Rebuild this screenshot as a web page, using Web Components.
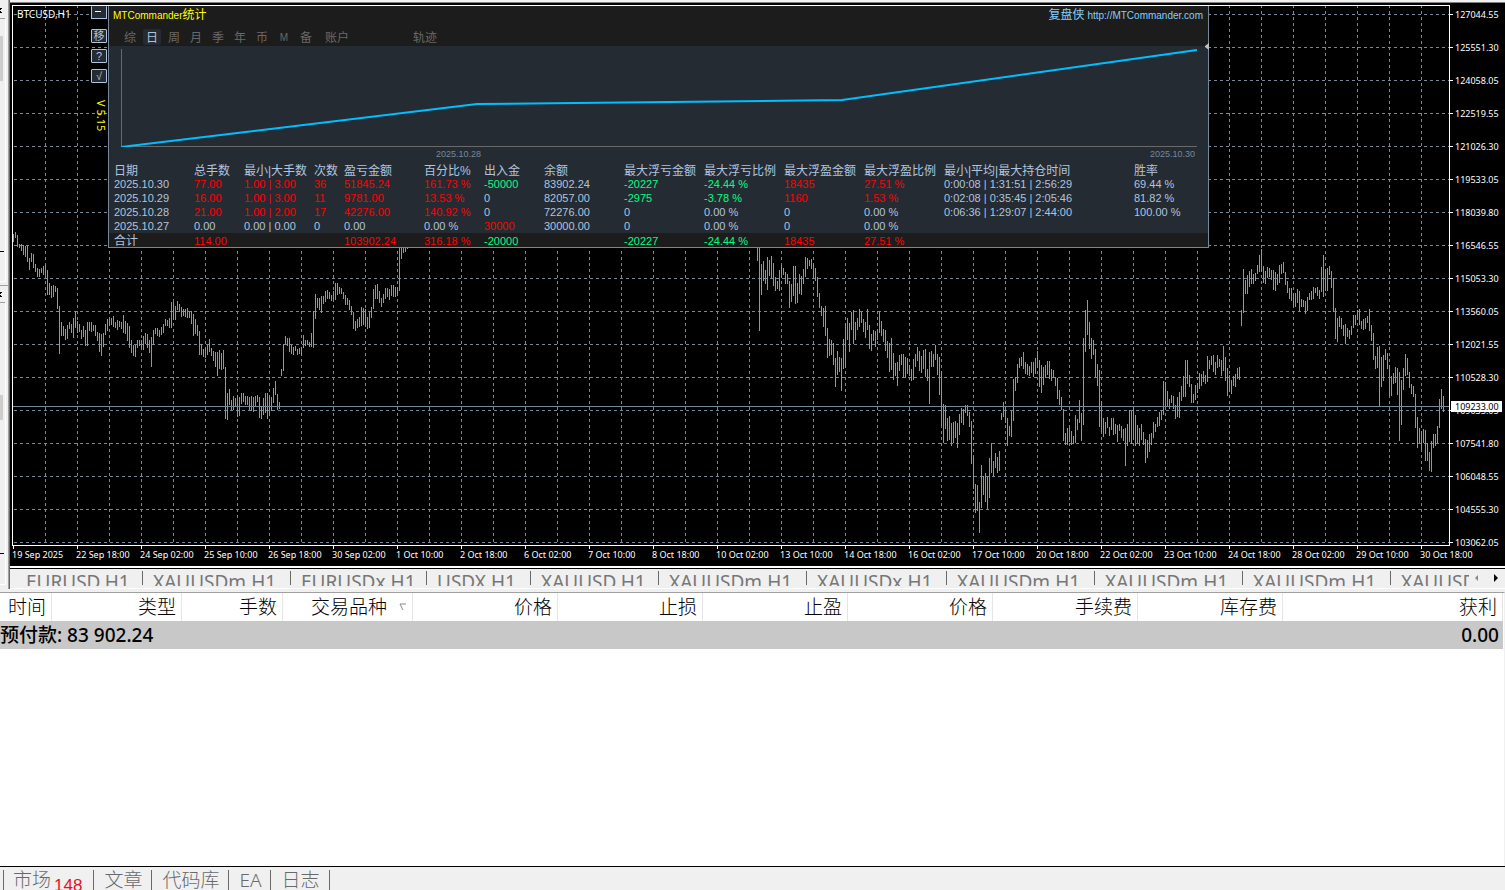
<!DOCTYPE html>
<html lang="zh-CN">
<head>
<meta charset="utf-8">
<title>BTCUSD,H1</title>
<style>
  html, body { margin: 0; height: 100%; }
  body { font-family: "Noto Sans", "Noto Sans CJK SC", sans-serif; background: #f0f0f0; color: #000; overflow: hidden; }
</style>
</head>
<body>
<terminal-app></terminal-app>

<script>
const define = (name, html, setup) => {
  const template = document.createElement('template');
  template.innerHTML = html;
  customElements.define(name, class extends HTMLElement {
    connectedCallback() {
      if (this.shadowRoot) return;
      const root = this.attachShadow({ mode: 'open' });
      root.append(template.content.cloneNode(true));
      if (setup) setup(root, this);
    }
  });
};

/* ---------- docked panels at the left edge ---------- */
define('dock-edge', `
<style>
  :host { display: block; background: #f0f0f0; border-right: 1px solid #696969; box-shadow: inset -1px 0 #a0a0a0; box-sizing: border-box; overflow: hidden; }
  svg { display: block; width: 9px; height: 588px; }
</style>
<svg viewBox="0 0 9 588" shape-rendering="crispEdges" aria-hidden="true">
  <path d="M0 8h2v1h-1v1h-1zM0 11h1v1h1v1h-2zM0 292h2v1h-1v1h-1zM0 295h1v1h1v1h-2z" fill="#000"/>
  <path d="M0 18h5v1h-5zM0 302h5v1h-5zM0 285h8v1h-8z" fill="#a0a0a0"/>
  <path d="M5 19h1v263h-6v-1h5zM5 303h1v282h-6v-1h5z" fill="#fff"/>
  <path d="M0 36h3v45h-3zM0 395h3v25h-3z" fill="#cdcdcd"/>
  <path d="M0 251h4v1h-4zM0 553h4v1h-4z" fill="#000"/>
</svg>`);

/* ---------- price bars: [high, low, high, low, ...], three units to a pixel ---------- */
const SERIES = [
  { x: 0, y: 224, hl: [12,36,6,24,15,51,42,54,42,63,45,75,48,81,48,96,84,120,69,96,72,114,102,126,114,141,117,141,114,129,108,135,105,135,120,195,159,195,168,204,165,201,168,186,174,237,228,372,276,318,288,318,297,330,285,327,276,297,282,309,264,324,243,294,273,309,282,306,300,327,288,321,300,348,276,348,276,303,276,306,285,303,285,318,306,333,309,366,312,378,309,351,282,315,267,303,267,288,264,285,258,291,276,294,270,300,273,291,276,297,255,309,273,312,279,333,288,354,330,369,345,378,345,381,330,354,330,348,330,354,318,360,309,342,312,354,330,369,321,411,300,345,294,312,294,318,300,321,291,315,282,309,267,288,270,288,264,294,216,294,216,270,228,270,213,240,222,246,231,261,237,258,237,261,234,264,243,264,243,282,252,318,267,312,285,318,303,375,342,375,357,381,351,384,345,375,327,366,354,378,363,393,366,411,366,438,360,417,369,420,360,417,411,567,489,570,477,525,510,540,498,540,504,531,495,561,501,558,489,522,489,516,498,525,498,525,501,540,498,543,501,546,498,531,495,516,501,564,528,567,504,555,489,549,489,567,498,558,501,543,474,519,453,495,492,540,516,537,417,438,342,423,318,345,324,348,324,366,345,372,351,375,348,363,357,375,354,372,351,378,315,354,330,348,330,345,336,351,309,351,243,354,192,267,204,234,204,240,198,249,198,222,183,216,180,207,186,207,195,213,183,210,159,210,159,195,171,192,174,192,186,207,195,225,204,225,210,240,228,255,246,297,273,303,267,294,261,291,231,288,234,285,237,291,261,297,246,294,231,264,177,237,165,207,162,207,183,219,204,231,192,219,174,207,174,201,177,210,165,198,165,201,171,201,171,198,45,183,48,87,48,69,48,66,48,57] },
  { x: 744, y: 234, hl: [24,63,24,273,72,165,63,123,90,132,51,150,60,108,48,114,69,138,111,153,123,147,90,153,75,114,84,105,96,132,102,132,123,204,132,186,78,168,78,192,129,189,102,162,108,165,87,132,51,111,54,87,60,78,57,87,72,114,84,123,111,171,159,204,198,228,204,261,198,288,264,354,297,348,300,345,309,375,354,441,333,405,351,396,354,453,297,387,249,384,234,300,249,336,216,270,210,312,246,300,234,270,207,261,216,249,237,276,246,294,207,270,255,327,282,333,270,303,273,321,267,300,213,279,243,288,267,306,270,333,303,354,309,396,294,390,339,420,369,408,366,438,345,393,342,375,342,414,351,414,354,402,375,408,387,423,357,420,342,381,321,363,333,393,348,399,330,387,327,411,387,423,336,492,333,381,342,381,315,360,342,405,351,465,393,558,492,609,495,567,534,603,528,600,549,618,546,609,543,594,549,624,522,585,504,549,507,555,495,519,495,528,516,561,543,672,651,747,732,819,735,813,786,879,675,804,708,765,699,786,711,807,654,774,609,699,663,708,639,684,651,699,633,693,519,540,486,531,498,549,534,618,558,588,513,591,417,543,411,453,372,429,354,384,351,378,336,387,366,402,372,405,378,408,366,399,366,411,354,402,333,384,360,441,375,459,381,435,375,414,363,405,363,417,387,423,390,414,411,438,414,477,450,495,471,510,507,603,579,615,564,615,564,606,573,615,588,612,525,609,537,570,480,549,519,603,294,555,210,336,180,285,246,327,294,357,300,345,327,411,372,438,390,561,483,576] },
  { x: 1090, y: 234, hl: [534,591,546,582,531,564,561,588,534,570,534,585,552,582,555,606,552,573,558,594,567,603,564,678,552,618,510,606,513,612,501,600,525,618,555,609,564,618,552,600,576,615,597,669,600,654,582,636,579,615,546,594,552,576,531,561,516,558,513,540,423,525,426,498,453,498,477,507,465,489,468,507,495,537,471,531,456,534,438,483,408,471,360,471,360,432,405,441,432,489,462,489,435,480,432,459,399,447,402,438,393,426,405,432,348,426,360,387,348,375,345,396,366,405,345,384,357,381,360,408,318,393,351,423,384,468,405,456,420,462,408,438,402,441,384,417,381,420,210,258,87,219,120,162,105,162,93,141,87,132,102,132,99,123,75,102,45,96,27,96,78,129,93,132,81,114,84,111,90,120,90,150,96,153,102,135,75,129,72,102,66,99,96,135,123,159,144,177,144,183,159,201,159,201,147,189,153,213,177,201,180,201,183,222,171,213,159,180,153,180,141,177,144,159,141,168,150,177,81,156,45,171,87,153,84,153,78,105,93,144,114,216,204,297,234,306,228,261,234,267,255,288,252,312,264,291,270,297,258,285,225,264,225,255,210,240,207,255,243,267,237,270,234,267,228,249,207,273,255,303,279,360,348,387,321,384,318,501,351,441,345,423,327,360,339,387,375,468,408,468,399,432,381,429,384,465,396,603,420,555,384,450,342,408,354,405,396,444,432,462,438,471,462,564,531,624,564,609,573,627,567,609,570,663,609,663,636,693,603,696,582,624,582,618,558,609,477,564,447,507,468,516] }
];

define('price-plot', `
<style>
  :host { display: block; position: relative; border: 1px solid #fff; background: #000; color: #fff; min-width: 0; overflow: hidden; }
  svg { display: block; width: 100%; height: 539px; }
  .symbol { position: absolute; left: 4px; top: 1px; font-size: 10px; line-height: 14px; }
  tool-strip { position: absolute; left: 78px; top: 0; }
  stats-panel { position: absolute; left: 95px; top: 0; }
</style>
<svg shape-rendering="crispEdges" role="img" aria-label="BTCUSD,H1">
  <defs>
    <pattern id="v" x="32" y="-1" width="32" height="6" patternUnits="userSpaceOnUse"><rect width="1" height="3" fill="#778899"/></pattern>
    <pattern id="h" x="1" y="8" width="6" height="33" patternUnits="userSpaceOnUse"><rect width="3" height="1" fill="#778899"/></pattern>
  </defs>
  <rect x="1" width="100%" height="100%" fill="url(#v)"/>
  <rect width="100%" height="100%" fill="url(#h)"/>
  <path id="bars" fill="#00ff00"/>
  <rect y="400" width="100%" height="1" fill="#778899"/>
</svg>
<span class="symbol">BTCUSD,H1</span>
<tool-strip></tool-strip>
<stats-panel></stats-panel>`, root => {
  let d = '';
  for (const s of SERIES)
    for (let i = 0; i < s.hl.length; i += 2) {
      const top = s.y + s.hl[i] / 3, h = (s.hl[i + 1] - s.hl[i]) / 3;
      d += `M${s.x + i} ${top}h1v${h}h-1z`;
    }
  root.getElementById('bars').setAttribute('d', d);
});

define('tool-strip', `
<style>
  :host { display: flex; flex-direction: column; align-items: flex-end; width: 16px; color: #b0c4de; }
  button { box-sizing: border-box; width: 16px; height: 14px; margin: 0 0 6px; padding: 0; border: 1px solid #b0c4de; border-radius: 1px; background: #252b33; color: inherit; font: 11px/12px "Liberation Sans", "Noto Sans CJK SC", sans-serif; overflow: hidden; }
  .min { height: 13px; margin-bottom: 10px; border-top: 0; }
  svg { display: block; }
  .ver { writing-mode: vertical-rl; color: #ff0; font-size: 11px; line-height: 12px; margin-top: 11px; }
</style>
<button class="min" aria-label="最小化"><svg width="14" height="12" shape-rendering="crispEdges"><path d="M3 5h6v1h-6z" fill="#fff"/></svg></button>
<button>移</button>
<button>?</button>
<button>√</button>
<span class="ver">V 5.15</span>`);

/* ---------- account statistics ---------- */
const COLS = ['日期','总手数','最小|大手数','次数','盈亏金额','百分比%','出入金','余额','最大浮亏金额','最大浮亏比例','最大浮盈金额','最大浮盈比例','最小|平均|最大持仓时间','胜率'];
const WIDTHS = [80,50,70,30,80,60,60,80,80,80,80,80,190,79];
/* a leading "+" marks a gain (red), "~" a loss (green) */
const ROWS = [
  ['2025.10.30','+77.00','+1.00 | 3.00','+36','+51845.24','+161.73 %','~-50000','83902.24','~-20227','~-24.44 %','+18435','+27.51 %','0:00:08 | 1:31:51 | 2:56:29','69.44 %'],
  ['2025.10.29','+16.00','+1.00 | 3.00','+11','+9781.00','+13.53 %','0','82057.00','~-2975','~-3.78 %','+1160','+1.53 %','0:02:08 | 0:35:45 | 2:05:46','81.82 %'],
  ['2025.10.28','+21.00','+1.00 | 2.00','+17','+42276.00','+140.92 %','0','72276.00','0','0.00 %','0','0.00 %','0:06:36 | 1:29:07 | 2:44:00','100.00 %'],
  ['2025.10.27','0.00','0.00 | 0.00','0','0.00','0.00 %','+30000','30000.00','0','0.00 %','0','0.00 %','',''],
  ['合计','+114.00','','','+103902.24','+316.18 %','~-20000','','~-20227','~-24.44 %','+18435','+27.51 %','','']
];

define('stats-panel', `
<style>
  :host { display: block; box-sizing: border-box; width: 1101px; border: 1px solid #778899; border-top: 0; background: #252b33; color: #b0c4de; font-family: "Liberation Sans", "Noto Sans CJK SC", sans-serif; font-size: 11px; }
  header { background: #1c1c1c; height: 40px; }
  .title { display: flex; justify-content: space-between; padding: 0 5px 0 4px; height: 20px; line-height: 18px; font-size: 10px; color: #ff0; }
  .cjk { font-size: 12px; }
  a { color: #87cefa; text-decoration: none; }
  nav { display: flex; height: 18px; padding: 2px 0 0 10px; align-items: center; }
  button { border: 0; padding: 0; margin: 0; width: 22px; height: 16px; background: none; color: #696969; font: 12px/18px "Liberation Sans", "Noto Sans CJK SC", sans-serif; white-space: nowrap; }
  button.latin { font-size: 10px; }
  button.wide { width: 40px; }
  button.on { color: #b0c4de; background: #252b33; border-radius: 2px; width: 18px; margin: 0 2px; }
  .gap { width: 48px; }
  .curve { position: relative; height: 101px; }
  .curve svg { display: block; width: 100%; height: 101px; }
  .dates { display: flex; justify-content: space-between; height: 16px; line-height: 14px; font-size: 9px; color: #778899; padding: 0 13px 0 327px; }
  table { border-collapse: collapse; table-layout: fixed; width: 100%; }
  th, td { height: 14px; line-height: 14px; padding: 0 0 0 5px; text-align: left; font-weight: 400; white-space: nowrap; }
  th { line-height: 12px; padding-top: 2px; height: 12px; }
  th, tfoot td:first-child { font-size: 12px; }
  tfoot { background: #1c1c1c; }
  tfoot td { line-height: 12px; padding-top: 2px; height: 12px; }
  .gain { color: #f00; } .loss { color: #00ff7f; }
  .handle { position: absolute; right: -1px; top: -3px; width: 4px; height: 7px; }
  .curve .handle svg { width: 4px; height: 7px; }
</style>
<header>
  <div class="title"><span>MTCommander<span class="cjk">统计</span></span><a href="http://MTCommander.com"><span class="cjk">复盘侠</span> http://MTCommander.com</a></div>
  <nav>
    <button>综</button><button class="on">日</button><button>周</button><button>月</button><button>季</button><button>年</button><button>币</button><button class="latin">M</button><button>备</button><button class="wide">账户</button><span class="gap"></span><button class="wide">轨迹</button>
  </nav>
</header>
<div class="curve">
  <svg aria-hidden="true">
    <path d="M12 3h1v98h-1zM12 100h1076v1h-1076z" fill="#696969" shape-rendering="crispEdges"/>
    <polyline points="12,101 368,58 466,57 733,54 1088,4" fill="none" stroke="#00bfff" stroke-width="2"/>
  </svg>
  <span class="handle"><svg viewBox="0 0 4 7"><path d="M4 0v7L0 4v-1z" fill="#c0c0c0"/></svg></span>
</div>
<div class="dates"><span>2025.10.28</span><span>2025.10.30</span></div>
<table><colgroup></colgroup><thead><tr></tr></thead><tbody></tbody><tfoot></tfoot></table>`, root => {
  root.querySelector('colgroup').innerHTML = WIDTHS.map(w => `<col style="width:${w}px">`).join('');
  root.querySelector('thead tr').innerHTML = COLS.map(c => `<th>${c}</th>`).join('');
  const cls = { '+': 'gain', '~': 'loss' };
  const row = cells => '<tr>' + cells.map(c => cls[c[0]] ? `<td class="${cls[c[0]]}">${c.slice(1)}</td>` : `<td>${c}</td>`).join('') + '</tr>';
  root.querySelector('tbody').innerHTML = ROWS.slice(0, -1).map(row).join('');
  root.querySelector('tfoot').innerHTML = row(ROWS[ROWS.length - 1]);
});

/* ---------- chart axes ---------- */
const addLabels = (root, host, separator) => {
  for (const value of host.getAttribute('values').split(separator)) {
    const label = document.createElement('span');
    label.textContent = value;
    root.append(label);
  }
};

define('price-axis', `
<style>
  :host { display: flex; flex-direction: column; gap: 16px; position: relative; padding-top: 1px; color: #fff; font-size: 9px; line-height: 17px; }
  span { padding-left: 5px; background: linear-gradient(#fff, #fff) 0 8px / 3px 1px no-repeat; }
  b { position: absolute; z-index: 1; left: 1px; right: 3px; top: 396px; line-height: 11px; padding-left: 4px; background: #fff; color: #000; font-weight: 400; }
</style>
<b>109233.00</b>`, (root, host) => addLabels(root, host, ' '));

define('time-axis', `
<style>
  :host { display: flex; color: #fff; font-size: 9px; line-height: 18px; height: 20px; overflow: hidden; }
  span { flex: none; width: 64px; white-space: nowrap; background: linear-gradient(#fff, #fff) 1px 0 / 1px 3px no-repeat; }
</style>`, (root, host) => addLabels(root, host, '|'));

define('chart-window', `
<style>
  :host { display: grid; grid-template-columns: minmax(0, 1fr) 55px; background: #000; padding: 2px 0 0 2px; border-top: 1px solid #808080; border-bottom: 2px solid #fff; }
  price-axis { height: 540px; }
  time-axis { grid-column: 1 / 3; }
</style>
<price-plot></price-plot>
<price-axis values="127044.55 125551.30 124058.05 122519.55 121026.30 119533.05 118039.80 116546.55 115053.30 113560.05 112021.55 110528.30 109035.05 107541.80 106048.55 104555.30 103062.05"></price-axis>
<time-axis values="19 Sep 2025|22 Sep 18:00|24 Sep 02:00|25 Sep 10:00|26 Sep 18:00|30 Sep 02:00|1 Oct 10:00|2 Oct 18:00|6 Oct 02:00|7 Oct 10:00|8 Oct 18:00|10 Oct 02:00|13 Oct 10:00|14 Oct 18:00|16 Oct 02:00|17 Oct 10:00|20 Oct 18:00|22 Oct 02:00|23 Oct 10:00|24 Oct 18:00|28 Oct 02:00|29 Oct 10:00|30 Oct 18:00"></time-axis>`);

/* ---------- chart tabs ---------- */
define('chart-tab', `
<style>
  :host { display: block; flex: none; box-sizing: border-box; height: 17px; background: linear-gradient(#696969, #696969) 100% 2px / 1px 14px no-repeat; }
  button { display: block; border: 0; background: none; margin: 0; padding: 0 0 0 10px; font: 19px/26px "Noto Sans", sans-serif; color: #777; white-space: nowrap; }
</style>
<button><slot></slot></button>`);

define('chart-tabs', `
<style>
  :host { display: flex; border-top: 1px solid #000; border-bottom: 1px solid #fff; height: 19px; padding-left: 6px; background: #f0f0f0; }
  .strip { display: flex; flex: 1; min-width: 0; height: 17px; overflow: hidden; }
  .w127 { width: 127px; } .w148 { width: 148px; } .w136 { width: 136px; } .w104 { width: 104px; } .w128 { width: 128px; } .w140 { width: 140px; }
  nav { display: flex; flex: none; width: 31px; padding-left: 5px; height: 17px; align-items: center; gap: 14px; }
  nav button { border: 0; padding: 0; width: 5px; height: 8px; background: none; display: block; }
  svg { display: block; }
</style>
<div class="strip">
  <chart-tab class="w127">EURUSD,H1</chart-tab><chart-tab class="w148">XAUUSDm,H1</chart-tab><chart-tab class="w136">EURUSDx,H1</chart-tab><chart-tab class="w104">USDX,H1</chart-tab><chart-tab class="w128">XAUUSD,H1</chart-tab><chart-tab class="w148">XAUUSDm,H1</chart-tab><chart-tab class="w140">XAUUSDx,H1</chart-tab><chart-tab class="w148">XAUUSDm,H1</chart-tab><chart-tab class="w148">XAUUSDm,H1</chart-tab><chart-tab class="w148">XAUUSDm,H1</chart-tab><chart-tab class="w148">XAUUSDm,H1</chart-tab>
</div>
<nav>
  <button aria-label="向左"><svg width="5" height="8"><path d="M4 1v6L1 4z" fill="#888"/></svg></button>
  <button aria-label="向右"><svg width="5" height="8"><path d="M1 0v8L5 4z" fill="#000"/></svg></button>
</nav>`);

/* ---------- trade list ---------- */
define('trade-list', `
<style>
  :host { display: block; flex: 1; background: #fff; border-top: 1px solid #a0a0a0; border-right: 1px solid #f0f0f0; padding-right: 1px; margin-top: 3px; }
  table { width: 100%; border-collapse: separate; border-spacing: 0; table-layout: fixed; font-size: 19px; line-height: 28px; }
  th { font-weight: 300; text-align: right; padding: 0 5px 0 0; border-right: 1px solid #e5e5e5; height: 28px; white-space: nowrap; }
  td { background: #c8c8c8; font-weight: 500; height: 28px; padding: 0; white-space: nowrap; }
  td + td { text-align: right; padding-right: 4px; }
  svg { vertical-align: 3px; margin: 0 1px 0 12px; }
  .c52 { width: 52px; } .c130 { width: 130px; } .c101 { width: 101px; } .c145 { width: 145px; }
</style>
<table>
  <colgroup><col class="c52"><col class="c130"><col class="c101"><col class="c130"><col class="c145"><col class="c145"><col class="c145"><col class="c145"><col class="c145"><col class="c145"><col></colgroup>
  <thead><tr><th>时间</th><th>类型</th><th>手数</th><th>交易品种<svg width="7" height="8" aria-hidden="true"><path d="M7 1H1L4 7" fill="none" stroke="#888"/></svg></th><th>价格</th><th>止损</th><th>止盈</th><th>价格</th><th>手续费</th><th>库存费</th><th>获利</th></tr></thead>
  <tbody><tr><td colspan="5">预付款: 83 902.24</td><td colspan="6">0.00</td></tr></tbody>
</table>`);

define('terminal-tabs', `
<style>
  :host { display: flex; background: #f0f0f0; border-top: 1px solid #000; height: 23px; padding-left: 3px; overflow: hidden; }
  button { display: flex; flex: none; border: 0; border-left: 1px solid #696969; background: none; margin: 3px 0 0; padding: 0 9px 0 10px; font: 300 19px/20px "Noto Sans", "Noto Sans CJK SC", sans-serif; color: #696969; height: 20px; }
  .market { padding-left: 9px; }
  .end { border-left: 1px solid #696969; margin-top: 3px; }
  sub { font: 17px/31px "Liberation Sans", sans-serif; color: #e81123; margin: 0 2px 0 3px; }
</style>
<button class="market">市场<sub>148</sub></button><button>文章</button><button>代码库</button><button>EA</button><button>日志</button><span class="end"></span>`);

define('terminal-app', `
<style>
  :host { display: flex; flex-direction: column; min-height: 100vh; background: #f0f0f0; }
  .work { display: grid; grid-template-columns: 10px minmax(0, 1fr); }
  .main { padding-top: 2px; min-width: 0; }
</style>
<div class="work">
  <dock-edge></dock-edge>
  <div class="main"><chart-window></chart-window><chart-tabs></chart-tabs></div>
</div>
<trade-list></trade-list>
<terminal-tabs></terminal-tabs>`);
</script>
</body>
</html>
